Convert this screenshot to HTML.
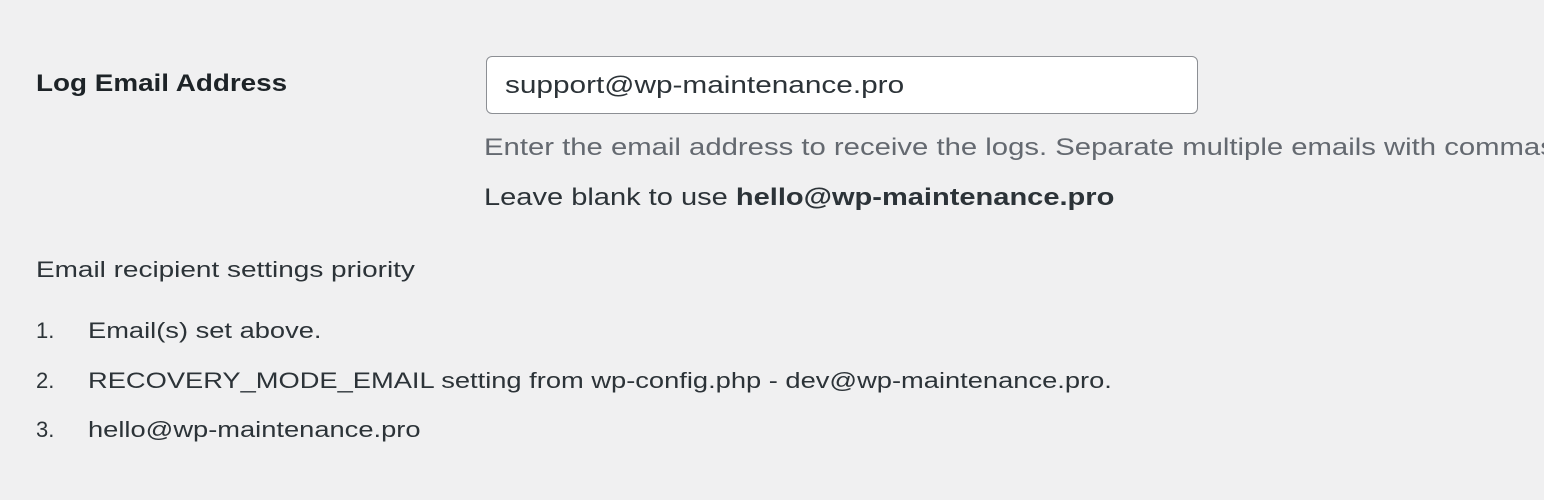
<!DOCTYPE html>
<html><head><meta charset="utf-8"><style>
html,body{margin:0;padding:0;}
body{width:1544px;height:500px;background:#f0f0f1;font-family:"Liberation Sans",sans-serif;color:#1d2327;position:relative;overflow:hidden;}
.abs{position:absolute;white-space:nowrap;transform-origin:0 50%;}
.label{left:36px;top:68px;font-size:24px;font-weight:bold;line-height:32px;transform:scaleX(1.16);}
.input{left:486px;top:56px;width:710px;height:56px;border:1px solid #8c8f94;border-radius:6px;background:#fff;transform:none;}
.input span{position:absolute;left:18px;top:13px;font-size:24px;line-height:32px;color:#2c3338;transform:scaleX(1.24);transform-origin:0 50%;white-space:nowrap;}
.desc{left:484px;top:132px;font-size:24px;line-height:32px;color:#646970;transform:scaleX(1.22);}
.blank{left:484px;top:182px;font-size:24px;line-height:32px;color:#2c3338;transform:scaleX(1.21);}
.p{left:36px;top:255px;font-size:22px;line-height:30px;color:#2c3338;transform:scaleX(1.27);}
.li{font-size:22px;line-height:30px;color:#2c3338;}
.li b{font-weight:normal;position:absolute;left:0;}
.li span{position:absolute;left:52px;transform:scaleX(1.24);transform-origin:0 50%;}
</style></head><body>
<div class="abs label">Log Email Address</div>
<div class="abs input"><span>support@wp-maintenance.pro</span></div>
<div class="abs desc">Enter the email address to receive the logs. Separate multiple emails with commas.</div>
<div class="abs blank">Leave blank to use <strong>hello@wp-maintenance.pro</strong></div>
<div class="abs p">Email recipient settings priority</div>
<div class="abs li" style="left:36px;top:316px;"><b>1.</b><span>Email(s) set above.</span></div>
<div class="abs li" style="left:36px;top:366px;"><b>2.</b><span>RECOVERY_MODE_EMAIL setting from wp-config.php - dev@wp-maintenance.pro.</span></div>
<div class="abs li" style="left:36px;top:415px;"><b>3.</b><span>hello@wp-maintenance.pro</span></div>
</body></html>
